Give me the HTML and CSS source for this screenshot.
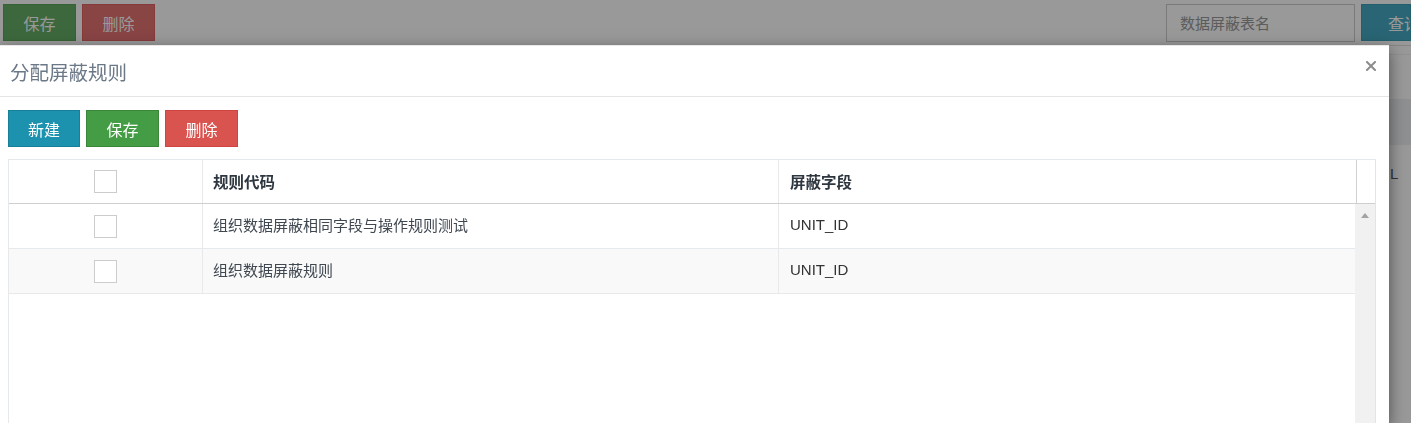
FILE: index.html
```html
<!DOCTYPE html>
<html lang="zh">
<head>
<meta charset="utf-8">
<title>分配屏蔽规则</title>
<link rel="stylesheet" href="styles.css">
</head>
<body>
<div class="page">
  <div class="toolbar">
    <button class="pbtn pbtn-green">保存</button>
    <button class="pbtn pbtn-red">删除</button>
    <div class="spacer"></div>
    <div class="pinput">数据屏蔽表名</div>
    <button class="pbtn pbtn-teal">查询</button>
  </div>
  <div class="panel">
    <div class="panel-head"></div>
    <div class="panel-row">L</div>
  </div>
</div>
<div class="backdrop"></div>
<div class="modal">
  <div class="modal-header">
    <div class="modal-title">分配屏蔽规则</div>
    <svg class="close" width="10" height="10" viewBox="0 0 10 10"><path d="M1 1L9 9M9 1L1 9" stroke="#8c8c8c" stroke-width="2" stroke-linecap="square"/></svg>
  </div>
  <div class="modal-body">
    <div class="actions">
      <button class="btn btn-teal">新建</button>
      <button class="btn btn-green">保存</button>
      <button class="btn btn-red">删除</button>
    </div>
    <div class="grid">
      <div class="grid-head">
        <div class="hcell hcell-check"><span class="check"></span></div>
        <div class="hcell">规则代码</div>
        <div class="hcell hcell-last">屏蔽字段</div>
        <div class="hgutter"></div>
      </div>
      <div class="grid-body">
        <div class="rows">
          <div class="row">
            <div class="cell cell-check"><span class="check"></span></div>
            <div class="cell">组织数据屏蔽相同字段与操作规则测试</div>
            <div class="cell cell-last">UNIT_ID</div>
          </div>
          <div class="row row-alt">
            <div class="cell cell-check"><span class="check"></span></div>
            <div class="cell">组织数据屏蔽规则</div>
            <div class="cell cell-last">UNIT_ID</div>
          </div>
        </div>
        <div class="scrollbar"><span class="arrow"></span></div>
      </div>
    </div>
  </div>
</div>
</body>
</html>
```

FILE: styles.css
```css
html, body {
  margin: 0;
  padding: 0;
  height: 100%;
  overflow: hidden;
  background: #fff;
  font-family: "Noto Sans CJK SC", "Liberation Sans", sans-serif;
}

.page {
  height: 100%;
  overflow: hidden;
}

.toolbar {
  display: flex;
  align-items: flex-start;
  padding: 4px 0 0 3px;
  height: 41px;
  gap: 6px;
  border-bottom: 1px solid #e0e0e0;
  overflow: hidden;
}

.spacer { flex: 1; }

.pbtn {
  height: 37px;
  width: 73px;
  border: 1px solid transparent;
  color: #fff;
  font-family: "Noto Sans CJK SC", sans-serif;
  font-size: 16px;
  padding: 0;
  flex-shrink: 0;
}
.pbtn-green { background: #66ad66; border-color: #5aa35a; }
.pbtn-red { background: #e47272; border-color: #e06262; }
.pbtn-teal { background: #45a9c2; border-color: #3aa0b8; width: 50px; text-align: left; padding-left: 26px; box-sizing: border-box; white-space: nowrap; overflow: hidden; }

.pinput {
  box-sizing: border-box;
  width: 189px;
  height: 38px;
  border: 1px solid #ccc;
  padding: 0 13px;
  font-size: 15px;
  line-height: 36px;
  color: #999;
}

.panel {
  margin-top: 8px;
  border-top: 1px solid #f2f2f2;
}
.panel-head {
  margin-top: 44px;
  height: 46px;
  background: #edf1f4;
}
.panel-row {
  padding: 20px 0 0 1390px;
  font-family: "Liberation Sans", sans-serif;
  font-size: 15px;
  color: #555;
}

.backdrop {
  position: fixed;
  inset: 0;
  background: rgba(0, 0, 0, 0.4);
}

.modal {
  position: absolute;
  left: 0;
  top: 45px;
  bottom: 0;
  width: 1389px;
  background: #fff;
  border-top: 1px solid #e8e8e8;
  box-shadow: 0 5px 15px rgba(0, 0, 0, 0.5);
  overflow: hidden;
  display: flex;
  flex-direction: column;
}

.modal-header {
  display: flex;
  align-items: center;
  justify-content: space-between;
  height: 50px;
  flex-shrink: 0;
  padding: 0 13px 0 10px;
  border-bottom: 1px solid #e5e5e5;
}
.modal-title {
  font-size: 19.5px;
  color: #6b7887;
  line-height: 1;
  margin-top: 1px;
}
.close {
  margin-top: -10px;
}

.modal-body {
  flex: 1;
  display: flex;
  flex-direction: column;
  min-height: 0;
  padding: 13px 13px 0 8px;
}

.actions {
  display: flex;
  gap: 6px;
}
.btn {
  box-sizing: border-box;
  height: 37px;
  width: 72px;
  padding: 0;
  border: 1px solid transparent;
  color: #fff;
  font-family: "Noto Sans CJK SC", sans-serif;
  font-size: 16px;
}
.btn-teal { background: #1c92ae; border-color: #197f98; }
.btn-green { background: #449d44; border-color: #3a873a; width: 73px; }
.btn-red { background: #d9534f; border-color: #cf4440; width: 73px; }

.grid {
  margin-top: 12px;
  flex: 1;
  min-height: 0;
  display: flex;
  flex-direction: column;
  border: 1px solid #e6e9ec;
  border-bottom: none;
  border-right-color: #dde6ec;
}

.grid-head {
  display: grid;
  grid-template-columns: 194px 576px 578px 1fr;
  height: 43px;
  flex-shrink: 0;
  border-bottom: 1px solid #cfcfcf;
}
.hcell {
  display: flex;
  align-items: center;
  padding-left: 10px;
  padding-bottom: 1px;
  border-right: 1px solid #e7eaec;
  font-size: 15.5px;
  font-weight: bold;
  color: #2e3740;
}
.hcell-check {
  justify-content: center;
  padding: 0;
}
.hcell-last {
  border-right: 1px solid #d0d0d0;
  padding-left: 11px;
}

.check {
  display: block;
  width: 21px;
  height: 21px;
  border: 1px solid #ccc;
  background: #fff;
}

.grid-body {
  display: flex;
  flex: 1;
  min-height: 0;
}
.rows {
  flex: 1;
}
.row {
  display: grid;
  grid-template-columns: 194px 576px 1fr;
  height: 44px;
  border-bottom: 1px solid #e7eaec;
}
.row-alt {
  background: #f9f9f9;
}
.cell {
  display: flex;
  align-items: center;
  padding-left: 10px;
  padding-bottom: 3px;
  border-right: 1px solid #e7eaec;
  font-size: 15px;
  color: #3f4750;
}
.cell-check {
  justify-content: center;
  padding: 0;
}
.cell-last {
  border-right: none;
  padding-left: 11px;
  font-family: "Liberation Sans", sans-serif;
  font-size: 15px;
  color: #333;
}

.scrollbar {
  width: 20px;
  background: #f1f1f1;
  display: flex;
  justify-content: center;
}
.arrow {
  margin-top: 9px;
  width: 0;
  height: 0;
  border-left: 4.5px solid transparent;
  border-right: 4.5px solid transparent;
  border-bottom: 5px solid #a3a3a3;
}
```
